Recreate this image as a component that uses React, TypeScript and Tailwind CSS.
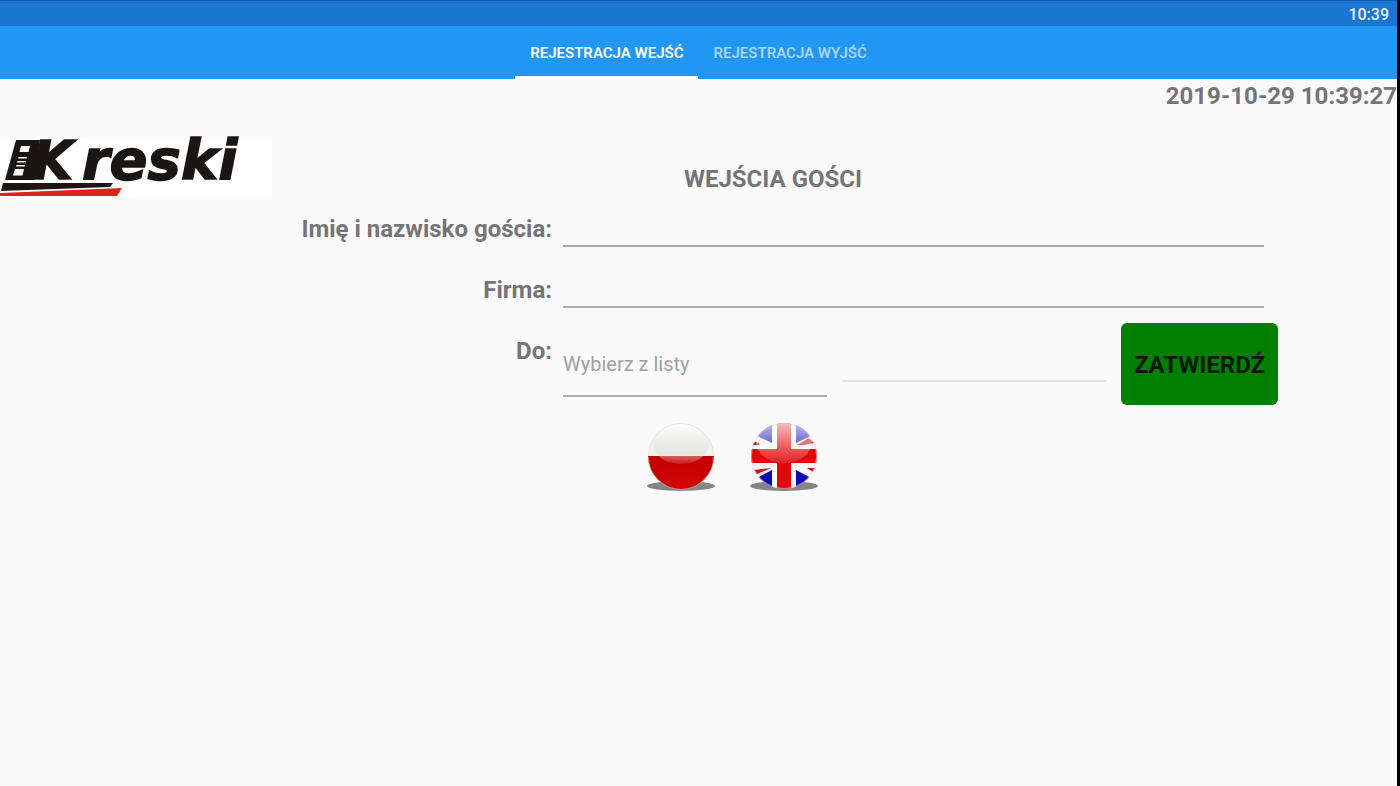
function KreskiLogo() {
  return (
    <svg viewBox="0 0 272 58" className="block w-full overflow-visible" role="img" aria-label="Kreski">
      <rect width="272" height="58" fill="#ffffff" />
      <g fill="#1b1614" stroke="#1b1614" fontFamily="'DejaVu Sans', sans-serif" fontWeight="700" fontStyle="italic">
        <polygon points="16,1 40,1 34,41 5,41" stroke="none" />
        <text x="32" y="40" fontSize="53" strokeWidth="1.500">K</text>
        <text x="82" y="40" fontSize="56" strokeWidth="1.500">reski</text>
      </g>
      <g fill="#ffffff">
        <polygon points="21,7 30,7 28.500,13 19.500,13" />
        <polygon points="18.500,18 27,18 26.500,19.500 18,19.500" />
        <polygon points="17.500,22 26,22 25.500,23.500 17,23.500" />
        <polygon points="16.500,26 25,26 24.500,27.500 16,27.500" />
        <polygon points="15,30 24,30 22.500,36.500 13,36.500" />
      </g>
      <polygon points="3,44 113,44 110,48 1,52" fill="#1b1614" />
      <polygon points="0,54 122,49 117,57 0,57" fill="#dd2418" />
    </svg>
  );
}

function PolishFlag() {
  return (
    <svg viewBox="0 0 70 72" className="block h-[72px] w-[70px]" aria-hidden="true">
      <defs>
        <clipPath id="pl-ball"><circle cx="35" cy="35" r="33" /></clipPath>
        <linearGradient id="pl-white" x1="0" y1="0" x2="0" y2="1">
          <stop offset="0" stopColor="#f4f4f3" />
          <stop offset="1" stopColor="#f0f0ee" />
        </linearGradient>
        <linearGradient id="pl-gloss" x1="0" y1="0" x2="0" y2="1">
          <stop offset="0" stopColor="#ffffff" stopOpacity="0.8" />
          <stop offset="0.75" stopColor="#dcdcd8" stopOpacity="0.5" />
          <stop offset="1" stopColor="#ffffff" stopOpacity="0.08" />
        </linearGradient>
        <radialGradient id="pl-red" cx="0.5" cy="0.8" r="0.6">
          <stop offset="0" stopColor="#d40505" />
          <stop offset="1" stopColor="#c60000" />
        </radialGradient>
      </defs>
      <ellipse cx="35" cy="65" rx="34" ry="5" fill="#858585" />
      <g clipPath="url(#pl-ball)">
        <rect width="70" height="35" fill="url(#pl-white)" />
        <rect y="35" width="70" height="36" fill="url(#pl-red)" />
        <ellipse cx="35" cy="23" rx="28" ry="20" fill="url(#pl-gloss)" />
      </g>
      <path d="M2.500 36a32.500 32.500 0 0 0 65 0" fill="none" stroke="#e2a8a0" strokeOpacity="0.6" />
      <path d="M2.500 35a32.500 32.500 0 0 1 65 0" fill="none" stroke="#dededc" strokeOpacity="0.7" />
    </svg>
  );
}

function BritishFlag() {
  return (
    <svg viewBox="0 0 70 72" className="block h-[72px] w-[70px]" aria-hidden="true">
      <defs>
        <clipPath id="uk-ball"><circle cx="35" cy="35" r="33" /></clipPath>
        <linearGradient id="uk-gloss" x1="0" y1="0" x2="0" y2="1">
          <stop offset="0" stopColor="#ffffff" stopOpacity="0.75" />
          <stop offset="1" stopColor="#ffffff" stopOpacity="0.1" />
        </linearGradient>
      </defs>
      <ellipse cx="35" cy="65" rx="34" ry="5" fill="#858585" />
      <g clipPath="url(#uk-ball)">
        <rect width="70" height="71" fill="#f8f8f8" />
        <g fill="#0a0ab4">
          <polygon points="23,-4 23,22 6,14 6,-4" />
          <polygon points="47,-4 47,22 64,14 64,-4" />
          <polygon points="23,49 23,72 6,72 6,58" />
          <polygon points="47,49 47,72 64,72 64,58" />
        </g>
        <g fill="#d01212">
          <polygon points="3,20 10,22 11,24 3,24" />
          <polygon points="48,24 60,17 65,22 55,24" />
          <polygon points="4,49 22,47 6,54" />
          <polygon points="58,47 67,47 64,51" />
        </g>
        <g fill="#e00808">
          <rect x="28" width="14" height="71" />
          <rect y="28" width="70" height="14" />
        </g>
        <ellipse cx="35" cy="21" rx="28" ry="21" fill="url(#uk-gloss)" />
      </g>
      <circle cx="35" cy="35" r="32.500" fill="none" stroke="#e6c8c8" strokeOpacity="0.6" />
    </svg>
  );
}

const line = "min-w-0 rounded-none border-b-2 border-[#acacac] bg-transparent outline-none";
const label = "w-[280px] shrink-0 pt-[15px] text-right text-2xl leading-7 font-bold";

export default function App() {
  return (
    <div className="flex min-h-screen flex-col border-r-[3px] border-black bg-[#fafafa] font-['Roboto',sans-serif] text-[#757575]">
      <header>
        <div className="flex h-[26px] items-center justify-end border-t border-[#1559a6] bg-[#1976d2] px-2 pt-0.5 text-base font-medium text-[#e4f1fd]">
          <time>10:39</time>
        </div>
        <nav className="flex h-[53px] justify-center bg-[#2196f3] text-[15px] font-semibold">
          <button type="button" aria-current="page" className="border-b-[3px] border-white px-[15px] pt-1 text-white">
            REJESTRACJA WEJŚĆ
          </button>
          <button type="button" className="border-b-[3px] border-transparent px-[15px] pt-1 text-[#a6d5fa]">
            REJESTRACJA WYJŚĆ
          </button>
        </nav>
      </header>

      <time className="block pt-[3px] text-right text-2xl leading-7 font-bold">2019-10-29 10:39:27</time>

      <main className="flex items-start">
        <div className="mt-[29px] w-[272px] shrink-0">
          <KreskiLogo />
        </div>

        <form className="mr-[119px] min-w-0 flex-1 pt-[55px]" onSubmit={(e) => e.preventDefault()}>
          <h1 className="mb-[7px] pr-1 text-center text-2xl leading-7 font-bold">WEJŚCIA GOŚCI</h1>

          <div className="flex h-[61px] items-start gap-[11px] pr-[14px]">
            <label htmlFor="guest" className={label}>Imię i nazwisko gościa:</label>
            <input id="guest" type="text" className={`${line} h-[47px] flex-1 text-xl`} />
          </div>
          <div className="flex h-[61px] items-start gap-[11px] pr-[14px]">
            <label htmlFor="company" className={label}>Firma:</label>
            <input id="company" type="text" className={`${line} h-[47px] flex-1 text-xl`} />
          </div>
          <div className="flex items-start gap-[11px]">
            <label htmlFor="host" className={label}>Do:</label>
            <div className="flex min-w-0 flex-1 items-start">
              <input
                id="host"
                type="text"
                placeholder="Wybierz z listy"
                className={`${line} h-[75px] flex-1 pt-[11px] text-xl placeholder:text-[#a0a0a0]`}
              />
              <input
                type="text"
                aria-label="Do"
                disabled
                className="mr-[14px] ml-4 h-[60px] min-w-0 flex-1 border-b-2 border-[#e4e4e4] bg-transparent text-xl"
              />
              <button
                type="submit"
                className="mt-px h-[82px] w-[157px] shrink-0 rounded-md bg-[#008000] pt-0.5 text-2xl font-bold text-[#041a04]"
              >
                ZATWIERDŹ
              </button>
            </div>
          </div>

          <div className="mt-4 ml-[374px] flex gap-[33px]">
            <button type="button" aria-label="Polski"><PolishFlag /></button>
            <button type="button" aria-label="English"><BritishFlag /></button>
          </div>
        </form>
      </main>
    </div>
  );
}
